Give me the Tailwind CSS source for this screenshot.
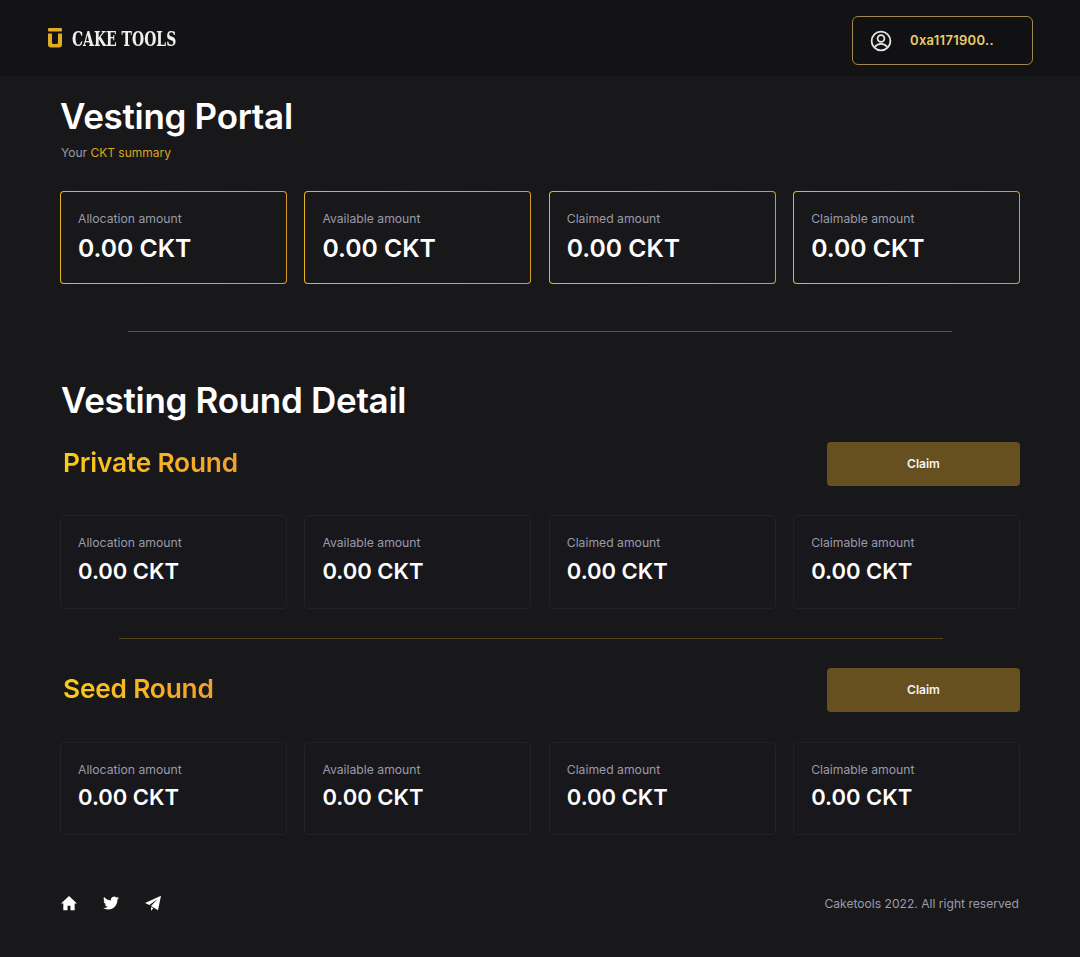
<!DOCTYPE html>
<html lang="en">
<head>
    <meta charset="UTF-8">
    <meta name="viewport" content="width=device-width, initial-scale=1.0">
    <title>Cake Tools - Vesting Portal</title>
    <script src="https://cdn.jsdelivr.net/npm/@tailwindcss/browser@4"></script>
</head>
<body class="bg-[#18181a] font-['Inter',sans-serif] text-white">
    <!-- Header -->
    <header class="h-[76px] bg-[#131315] flex items-start justify-between pl-[48px] pr-[47px]">
        <div class="h-[76px] flex items-center gap-[10px]">
            <svg width="14" height="20" viewBox="0 0 14 20" class="text-[#e0ab25]" fill="currentColor">
                <rect x="0" y="0" width="14" height="3.5" rx="1"></rect>
                <path d="M0 5.500h4v9q0 1.500 1.500 1.500h3q1.500 0 1.500-1.500v-9h4v11q0 3-3 3h-8q-3 0-3-3z"></path>
            </svg>
            <span class="w-[104px] font-['DejaVu_Serif',serif] font-bold text-[21px] leading-none text-[#f0f0f0] origin-left scale-x-[0.665] whitespace-nowrap">CAKE TOOLS</span>
        </div>
        <button class="w-[181px] h-[49px] mt-[16px] bg-[#111113] border border-[#a08a4c] rounded-md flex items-center pl-[17px]">
            <svg width="22" height="22" viewBox="0 0 22 22" fill="none" stroke="#e5e5e5" stroke-width="1.8">
                <circle cx="11" cy="11" r="9.400"></circle>
                <circle cx="11" cy="8.500" r="3.400"></circle>
                <path d="M4.800 17c1.500-2.200 3.700-3.200 6.200-3.200s4.700 1 6.200 3.200"></path>
            </svg>
            <span class="ml-[18px] text-[13px] font-semibold text-[#ebcb6b] tracking-[0.3px]">0xa1171900..</span>
        </button>
    </header>

    <main class="px-[60px]">
        <!-- Summary -->
        <h1 class="mt-[19px] text-[35px] leading-[42px] font-semibold tracking-[-0.3px]">Vesting Portal</h1>
        <p class="mt-[8px] ml-px text-[12px] leading-[16px] text-[#9b9baa]">Your <span class="text-[#d9a520]">CKT summary</span></p>

        <div class="mt-[30px] grid grid-cols-4 gap-[17.500px]">
            <div class="p-px rounded-[4px] bg-linear-to-r from-[#e6b422] to-[#d99a2b]">
                <div class="h-[91px] rounded-[3px] bg-[#18181a] pl-[17px] pt-[19px]">
                    <p class="text-[12.200px] leading-[16px] text-[#9b9baa]">Allocation amount</p>
                    <p class="mt-[3px] text-[24.700px] leading-[36px] font-semibold">0.00 CKT</p>
                </div>
            </div>
            <div class="p-px rounded-[4px] bg-linear-to-r from-[#e6b422] to-[#d99a2b]">
                <div class="h-[91px] rounded-[3px] bg-[#18181a] pl-[17px] pt-[19px]">
                    <p class="text-[12.200px] leading-[16px] text-[#9b9baa]">Available amount</p>
                    <p class="mt-[3px] text-[24.700px] leading-[36px] font-semibold">0.00 CKT</p>
                </div>
            </div>
            <div class="p-px rounded-[4px] bg-linear-to-r from-[#e6b422] to-[#d99a2b]">
                <div class="h-[91px] rounded-[3px] bg-[#18181a] pl-[17px] pt-[19px]">
                    <p class="text-[12.200px] leading-[16px] text-[#9b9baa]">Claimed amount</p>
                    <p class="mt-[3px] text-[24.700px] leading-[36px] font-semibold">0.00 CKT</p>
                </div>
            </div>
            <div class="p-px rounded-[4px] bg-linear-to-r from-[#e6b422] to-[#d99a2b]">
                <div class="h-[91px] rounded-[3px] bg-[#18181a] pl-[17px] pt-[19px]">
                    <p class="text-[12.200px] leading-[16px] text-[#9b9baa]">Claimable amount</p>
                    <p class="mt-[3px] text-[24.700px] leading-[36px] font-semibold">0.00 CKT</p>
                </div>
            </div>
        </div>

        <div class="mt-[47px] ml-[68px] w-[824px] h-px bg-[#6b5420]"></div>

        <!-- Round detail -->
        <h2 class="mt-[47px] text-[35px] leading-[42px] font-semibold tracking-[-0.3px] ml-px">Vesting Round Detail</h2>

        <div class="mt-[21px] flex justify-between items-start">
            <h3 class="ml-[3px] mt-[3px] text-[26.300px] leading-[36px] font-semibold tracking-[-0.2px] bg-linear-to-r from-[#facc15] to-[#f59e2b] bg-clip-text text-transparent">Private Round</h3>
            <button class="w-[193px] h-[44px] rounded-[4px] bg-[#665020] text-[12px] font-semibold text-[#f5f5f5]">Claim</button>
        </div>

        <div class="mt-[29px] grid grid-cols-4 gap-[17.500px]">
            <div class="h-[94px] rounded-[4px] border border-[#212127] bg-[#17171c] pl-[17px] pt-[19px]">
                <p class="text-[12.200px] leading-[16px] text-[#9b9baa]">Allocation amount</p>
                <p class="mt-[3px] text-[22px] leading-[34px] font-semibold">0.00 CKT</p>
            </div>
            <div class="h-[94px] rounded-[4px] border border-[#212127] bg-[#17171c] pl-[17px] pt-[19px]">
                <p class="text-[12.200px] leading-[16px] text-[#9b9baa]">Available amount</p>
                <p class="mt-[3px] text-[22px] leading-[34px] font-semibold">0.00 CKT</p>
            </div>
            <div class="h-[94px] rounded-[4px] border border-[#212127] bg-[#17171c] pl-[17px] pt-[19px]">
                <p class="text-[12.200px] leading-[16px] text-[#9b9baa]">Claimed amount</p>
                <p class="mt-[3px] text-[22px] leading-[34px] font-semibold">0.00 CKT</p>
            </div>
            <div class="h-[94px] rounded-[4px] border border-[#212127] bg-[#17171c] pl-[17px] pt-[19px]">
                <p class="text-[12.200px] leading-[16px] text-[#9b9baa]">Claimable amount</p>
                <p class="mt-[3px] text-[22px] leading-[34px] font-semibold">0.00 CKT</p>
            </div>
        </div>

        <div class="mt-[29px] ml-[59px] w-[824px] h-px bg-[#54431c]"></div>

        <div class="mt-[29px] flex justify-between items-start">
            <h3 class="ml-[3px] mt-[3px] text-[26.300px] leading-[36px] font-semibold tracking-[-0.2px] bg-linear-to-r from-[#facc15] to-[#f59e2b] bg-clip-text text-transparent">Seed Round</h3>
            <button class="w-[193px] h-[44px] rounded-[4px] bg-[#665020] text-[12px] font-semibold text-[#f5f5f5]">Claim</button>
        </div>

        <div class="mt-[30px] grid grid-cols-4 gap-[17.500px]">
            <div class="h-[93px] rounded-[4px] border border-[#212127] bg-[#17171c] pl-[17px] pt-[19px]">
                <p class="text-[12.200px] leading-[16px] text-[#9b9baa]">Allocation amount</p>
                <p class="mt-[2px] text-[22px] leading-[34px] font-semibold">0.00 CKT</p>
            </div>
            <div class="h-[93px] rounded-[4px] border border-[#212127] bg-[#17171c] pl-[17px] pt-[19px]">
                <p class="text-[12.200px] leading-[16px] text-[#9b9baa]">Available amount</p>
                <p class="mt-[2px] text-[22px] leading-[34px] font-semibold">0.00 CKT</p>
            </div>
            <div class="h-[93px] rounded-[4px] border border-[#212127] bg-[#17171c] pl-[17px] pt-[19px]">
                <p class="text-[12.200px] leading-[16px] text-[#9b9baa]">Claimed amount</p>
                <p class="mt-[2px] text-[22px] leading-[34px] font-semibold">0.00 CKT</p>
            </div>
            <div class="h-[93px] rounded-[4px] border border-[#212127] bg-[#17171c] pl-[17px] pt-[19px]">
                <p class="text-[12.200px] leading-[16px] text-[#9b9baa]">Claimable amount</p>
                <p class="mt-[2px] text-[22px] leading-[34px] font-semibold">0.00 CKT</p>
            </div>
        </div>

        <!-- Footer -->
        <footer class="mt-[59px] h-[20px] flex items-center justify-between">
            <div class="flex items-center gap-[26px] ml-px -translate-y-px">
                <svg width="16" height="16" viewBox="0 0 24 24" fill="#fff"><path d="M12 1.500 0 12.800h3.500V23h6.300v-7h4.400v7h6.300V12.800H24z"></path></svg>
                <svg width="16" height="16" viewBox="0 0 24 24" fill="#fff"><path d="M23.953 4.570a10 10 0 01-2.825.775 4.958 4.958 0 002.163-2.723c-.951.555-2.005.959-3.127 1.184a4.920 4.920 0 00-8.384 4.482C7.690 8.095 4.067 6.130 1.640 3.162a4.822 4.822 0 00-.666 2.475c0 1.710.870 3.213 2.188 4.096a4.904 4.904 0 01-2.228-.616v.060a4.923 4.923 0 003.946 4.827 4.996 4.996 0 01-2.212.085 4.936 4.936 0 004.604 3.417 9.867 9.867 0 01-6.102 2.105c-.390 0-.779-.023-1.170-.067a13.995 13.995 0 007.557 2.209c9.053 0 13.998-7.496 13.998-13.985 0-.210 0-.420-.015-.630A9.935 9.935 0 0024 4.590z"></path></svg>
                <svg width="16" height="16" viewBox="0 0 24 24" fill="#fff"><path d="M24 1 0 12l6.500 3L19 6 9 16.500 19.500 23z"></path><path d="M9 18v5.500l3.500-3.700z"></path></svg>
            </div>
            <p class="text-[12.100px] mr-px text-[#9b9baa]">Caketools 2022. All right reserved</p>
        </footer>
    </main>
</body>
</html>
